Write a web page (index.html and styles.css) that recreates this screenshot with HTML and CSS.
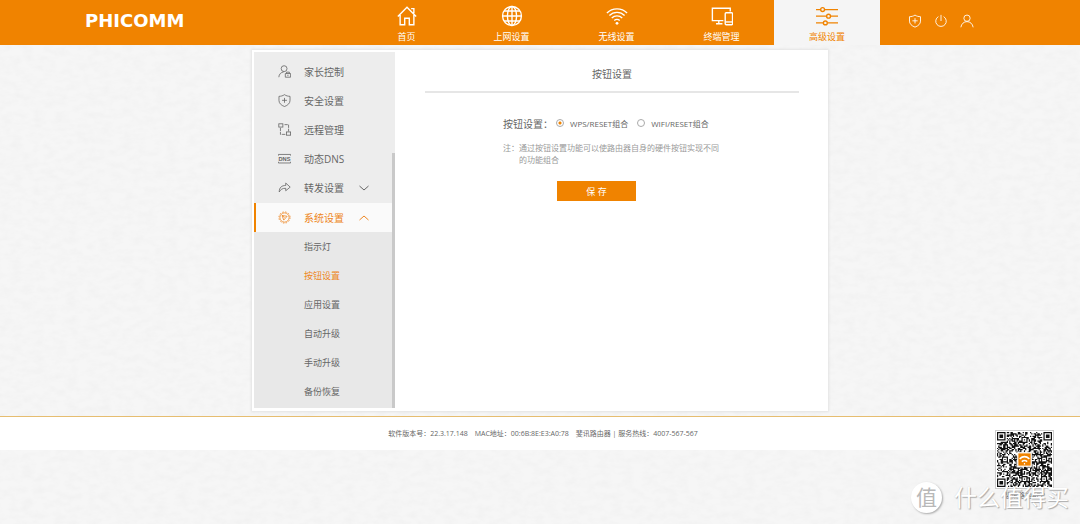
FILE: index.html
```html
<!DOCTYPE html>
<html lang="zh-CN">
<head>
<meta charset="utf-8">
<meta name="viewport" content="width=device-width, initial-scale=1">
<title>按钮设置</title>
<link rel="stylesheet" href="styles.css">
</head>
<body>
<svg class="paper" aria-hidden="true"><filter id="grain"><feTurbulence type="fractalNoise" baseFrequency="0.09 0.16" numOctaves="3" seed="4"/><feColorMatrix values="0 0 0 0 0.5  0 0 0 0 0.5  0 0 0 0 0.5  0.14 0 0 0 -0.05"/></filter><rect width="100%" height="100%" filter="url(#grain)"/></svg>

<header class="topbar">
  <a class="logo" href="#">PHICOMM</a>
  <nav class="nav">
    <a class="nav-item" href="#">
      <svg class="nav-icon" viewBox="0 0 24 24"><path d="M2 12.5 12 2.5 22 12.5M4.500 11v10.500h5v-7h5v7h5V11M16.500 4h3v5"/></svg>
      <span>首页</span></a>
    <a class="nav-item" href="#">
      <svg class="nav-icon" viewBox="0 0 24 24"><circle cx="12" cy="12" r="10.300"/><ellipse cx="12" cy="12" rx="5" ry="10.300"/><path d="M12 1.700v20.600M1.700 12h20.600M3.500 6.500h17M3.500 17.500h17"/></svg>
      <span>上网设置</span></a>
    <a class="nav-item" href="#">
      <svg class="nav-icon" viewBox="0 0 24 24"><path d="M1 8.700c6-6 16-6 22 0M3.700 11.500c4.600-4.600 12-4.600 16.600 0M6.300 14.300c3.200-3.200 8.200-3.200 11.400 0M9 17c1.800-1.600 4.200-1.600 6 0"/><circle class="dot" cx="12" cy="20" r="1.500"/></svg>
      <span>无线设置</span></a>
    <a class="nav-item" href="#">
      <svg class="nav-icon" viewBox="0 0 24 24"><path d="M13.500 17H1.500V3.500h19.500V7M8.500 17v3.500M5.500 20.500h7"/><rect x="15.500" y="8.500" width="8" height="13" rx="1"/><path d="M15.500 18.500h8"/></svg>
      <span>终端管理</span></a>
    <a class="nav-item nav-item-active" href="#" aria-current="page">
      <svg class="nav-icon" viewBox="0 0 24 24"><path d="M0 5h5M9.500 5H24M0 12.200h11.500M16 12.200h8M0 19.500h8M12.500 19.500H24"/><circle cx="7.200" cy="5" r="2.100"/><circle cx="13.700" cy="12.200" r="2.100"/><circle cx="10.200" cy="19.500" r="2.100"/></svg>
      <span>高级设置</span></a>
  </nav>
  <div class="tools">
    <button class="tool" aria-label="安全"><svg viewBox="0 0 16 16"><path d="M8 1.200c2 1.400 4 1.800 6.300 1.900v5c0 3.200-2.500 5.500-6.300 6.900-3.800-1.400-6.300-3.700-6.300-6.900v-5C4 3 6 2.600 8 1.200zM8 4.800v6M5 7.800h6"/></svg></button>
    <button class="tool" aria-label="退出"><svg viewBox="0 0 16 16"><path d="M8 1v7M5 3a6 6 0 1 0 6 0"/></svg></button>
    <button class="tool" aria-label="账户"><svg viewBox="0 0 16 16"><circle cx="8" cy="4.800" r="3.600"/><path d="M1 15.200c.5-4 3.500-6.500 7-6.500s6.500 2.500 7 6.500"/></svg></button>
  </div>
</header>

<main class="panel">
  <aside class="sidebar">
    <ul class="menu">
      <li><a class="menu-item" href="#"><svg class="menu-icon" viewBox="0 0 16 16"><circle cx="7.500" cy="4.500" r="3.600"/><path d="M1 15c.3-3.700 2.600-6 6-6.500M9 10.500h6.500V15H9zM10.500 10.500V8.800h3.500v1.700M12.200 12v1.500"/></svg><span class="menu-text">家长控制</span></a></li>
      <li><a class="menu-item" href="#"><svg class="menu-icon" viewBox="0 0 16 16"><path d="M8 .8c2 1.500 4.500 2 6.800 2.100v5c0 3.600-2.700 6-6.800 7.500C3.900 13.900 1.200 11.500 1.200 7.900v-5C3.500 2.800 6 2.300 8 .8zM8 4.800v6M5 7.800h6"/></svg><span class="menu-text">安全设置</span></a></li>
      <li><a class="menu-item" href="#"><svg class="menu-icon" viewBox="0 0 16 16"><rect x="1" y="1" width="5" height="4"/><rect x="10.500" y="11" width="5" height="4"/><path stroke-dasharray="4 1" d="M8 2h5v8.500M3 6v8h6"/></svg><span class="menu-text">远程管理</span></a></li>
      <li><a class="menu-item" href="#"><svg class="menu-icon" viewBox="0 0 16 16"><path d="M.5 4.500V3h15v1.500M.5 12v1.500h15V12"/><text x="8" y="11" text-anchor="middle" class="dns">DNS</text></svg><span class="menu-text">动态DNS</span></a></li>
      <li><a class="menu-item" href="#"><svg class="menu-icon" viewBox="0 0 16 16"><path d="M1.500 13.500C1.500 8 4.500 5.500 9.500 5.500V2.500l5.500 5-5.500 4.500V9c-4 0-6 1-8 4.500z"/></svg><span class="menu-text">转发设置</span><svg class="arrow" viewBox="0 0 10 6"><path d="M.5 1 5 5l4.500-4"/></svg></a></li>
      <li><a class="menu-item menu-item-active" href="#"><svg class="menu-icon" viewBox="0 0 16 16"><circle cx="8" cy="8" r="5.700"/><circle cx="8" cy="8" r="6.900" stroke-dasharray="1.800 1.810"/><path d="M5 5.500l6.200 1L7 11.200zM5 5.500l3 2.500"/></svg><span class="menu-text">系统设置</span><svg class="arrow" viewBox="0 0 10 6"><path d="M.5 5 5 1l4.500 4"/></svg></a>
        <ul class="submenu">
          <li><a href="#">指示灯</a></li>
          <li><a class="submenu-active" href="#">按钮设置</a></li>
          <li><a href="#">应用设置</a></li>
          <li><a href="#">自动升级</a></li>
          <li><a href="#">手动升级</a></li>
          <li><a href="#">备份恢复</a></li>
        </ul>
      </li>
    </ul>
    <div class="scrollbar"></div>
  </aside>
  <section class="content">
    <h1>按钮设置</h1>
    <form class="form">
      <div class="choices" role="radiogroup" aria-labelledby="combo-label">
        <span class="label" id="combo-label">按钮设置：</span>
        <label><input type="radio" name="combo" checked>WPS/RESET组合</label>
        <label><input type="radio" name="combo">WIFI/RESET组合</label>
      </div>
      <p class="note"><span>注：</span><span>通过按钮设置功能可以使路由器自身的硬件按钮实现不同的功能组合</span></p>
      <button class="save" type="button">保 存</button>
    </form>
  </section>
</main>

<footer class="footer">
  <span>软件版本号：22.3.17.148</span>
  <span>MAC地址：00:6B:8E:E3:A0:78</span>
  <span>斐讯路由器 | 服务热线：4007-567-567</span>
  <div class="qr">
    <svg class="qr-code" viewBox="0 0 45 45" role="img" aria-label="二维码"><path id="modules"/><rect class="qr-badge" x="17" y="17" width="11" height="11"/><path class="qr-wifi" d="M18.500 22c2.500-2.300 5.500-2.300 8 0M20.300 24.200c1.700-1.400 2.700-1.400 4.400 0M22 26h1"/></svg>
    <span class="qr-caption">斐讯路由APP</span>
  </div>
</footer>

<div class="watermark"><span class="seal">值</span><span class="seal-text">什么值得买</span></div>
<script src="qr.js"></script>
</body>
</html>
```
FILE: qr.js
```js
// Draws the module pattern: three finder squares plus a seeded fill.
const size = 45;
let seed = 20177;
const next = () => (seed = (seed * 16807) % 2147483647) / 2147483647;
const ring = (x, y, ox, oy, n) => {
  const r = Math.max(Math.abs(x - ox), Math.abs(y - oy));
  return r <= n ? r : -1;
};
let d = "";
for (let y = 0; y < size; y++) {
  for (let x = 0; x < size; x++) {
    let on = next() < 0.54;
    for (const [cx, cy] of [[3, 3], [41, 3], [3, 41]]) {
      const r = ring(x, y, cx, cy, 4);
      if (r >= 0) on = r !== 2 && r !== 4;
    }
    for (const [cx, cy] of [[22, 6], [38, 22], [6, 22], [22, 38], [38, 38]]) {
      const r = ring(x, y, cx, cy, 2);
      if (r >= 0) on = r !== 1;
    }
    if (on) d += `M${x} ${y}h1v1h-1z`;
  }
}
document.getElementById("modules").setAttribute("d", d);
```
FILE: styles.css
```css
* { box-sizing: border-box; }
body {
  margin: 0;
  min-height: 100vh;
  position: relative;
  background: #f6f6f6;
  color: #666;
  font-family: "Open Sans", "Noto Sans CJK SC", sans-serif;
  font-size: 10px;
}
a { color: inherit; text-decoration: none; }
ul { list-style: none; margin: 0; padding: 0; }
svg { fill: none; stroke: currentColor; flex: none; }
.paper { position: absolute; inset: 0; width: 100%; height: 100%; z-index: -1; stroke: none; }

.topbar { display: flex; height: 45px; background: #f08300; color: #fff; }
.logo {
  width: 354px;
  padding-left: 85px;
  font: bold 18px/41px "DejaVu Sans", sans-serif;
}
.nav { display: flex; }
.nav-item {
  width: 105px;
  padding-top: 5px;
  display: flex;
  flex-direction: column;
  align-items: center;
  font-size: 9px;
  line-height: 14px;
  gap: 3px;
}
.nav-item-active { width: 106px; background: #f5f5f5; color: #f08300; }
.nav-icon { width: 22px; height: 22px; stroke-width: 1.5; }
.dot { fill: currentColor; stroke: none; }
.tools { display: flex; align-items: center; gap: 12px; padding: 0 0 4px 28px; }
.tool { width: 14px; height: 14px; padding: 0; border: 0; background: none; color: #fff; }
.tool svg { display: block; width: 14px; height: 14px; }

.panel {
  display: flex;
  max-width: 576px;
  margin: 5px auto;
  padding: 2px 2px 3px;
  background: #fff;
  box-shadow: 0 0 2px 1px #e4e4e4;
}
.sidebar { display: flex; width: 141px; background: #ededed; }
.menu { flex: 1; padding-top: 6px; }
.menu-item {
  display: flex;
  align-items: center;
  height: 29px;
  padding: 0 0 2px 22px;
  border-left: 2px solid transparent;
}
.menu-item-active { background: #fafafa; border-color: #f08300; color: #ee8622; padding-bottom: 0; }
.menu-icon { width: 13px; height: 13px; margin-right: 13px; }
.menu-text { width: 55px; }
.arrow { width: 10px; height: 6px; }
.dns { font: bold 7px "Liberation Sans", sans-serif; fill: currentColor; stroke: none; }
.submenu { background: #e8e8e8; padding-bottom: 2px; font-size: 9px; }
.submenu a { display: block; height: 29px; line-height: 29px; padding-left: 50px; }
.submenu .submenu-active { color: #ee8622; }
.scrollbar { width: 3px; margin-top: 101px; background: #c9c9c9; }

.content { flex: 1; padding: 0 27px 0 30px; }
h1 {
  margin: 0;
  height: 41px;
  border-bottom: 2px solid #e6e6e6;
  font-size: 10px;
  font-weight: normal;
  line-height: 44px;
  text-align: center;
}
.form { padding: 21px 0 0 78px; }
.choices { display: flex; align-items: center; height: 18px; font-size: 8px; }
.label { width: 53px; font-size: 10px; white-space: nowrap; }
.choices label { display: flex; align-items: center; gap: 6px; margin-right: 9px; }
input[type="radio"] {
  appearance: none;
  width: 8px;
  height: 8px;
  margin: 0;
  border: 1px solid #aaa;
  border-radius: 50%;
}
input[type="radio"]:checked { background: radial-gradient(circle, #f08300 0 1px, #fff 2px); }
.note { display: flex; margin: 10px 0 0; max-width: 216px; color: #999; font-size: 8px; line-height: 12px; }
.note span:first-child { flex: none; width: 16px; }
.save {
  display: block;
  width: 79px;
  height: 20px;
  margin: 15px 0 0 54px;
  padding: 0;
  border: 0;
  background: #f08300;
  color: #fff;
  font: 9px "Open Sans", "Noto Sans CJK SC", sans-serif;
}

.footer {
  position: relative;
  display: flex;
  justify-content: center;
  gap: 7px;
  height: 34px;
  padding-left: 6px;
  border-top: 1px solid #e6bd70;
  background: #fff;
  font-size: 7px;
  line-height: 34px;
}
.qr { position: absolute; right: 26px; top: 13px; width: 59px; line-height: 14px; text-align: center; }
.qr-code { display: block; width: 59px; height: 59px; padding: 1px; border: 1px solid #ccc; background: #fff; }
#modules { fill: #111; stroke: none; }
.qr-badge { fill: #f08300; stroke: #fff; }
.qr-wifi { stroke: #fff; stroke-width: 1.3; }

.watermark { position: absolute; right: 11px; bottom: 9px; display: flex; align-items: center; gap: 12px; }
.seal {
  width: 31px;
  height: 31px;
  border-radius: 50%;
  background: #fff;
  box-shadow: 1px 1px 2px #aaa;
  color: #b8b8b8;
  font-size: 21px;
  line-height: 30px;
  text-align: center;
}
.seal-text { color: #fff; font-size: 23px; line-height: 36px; text-shadow: 1px 1px 1px #aaa, 0 0 1px #ccc; }
```
